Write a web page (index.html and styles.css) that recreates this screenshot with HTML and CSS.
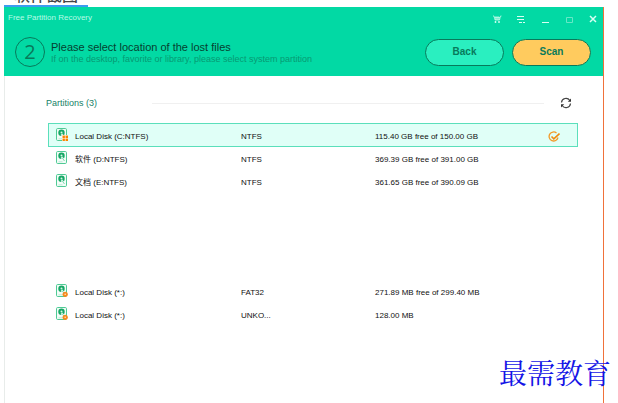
FILE: index.html
```
<!DOCTYPE html>
<html lang="en">
<head>
<meta charset="utf-8">
<title>Free Partition Recovery</title>
<link rel="stylesheet" href="styles.css">
</head>
<body>
<svg class="defs" aria-hidden="true">
  <symbol id="disk" viewBox="0 0 12 13">
    <rect x=".5" y=".5" width="10" height="12" rx="1.2" fill="#f2fcf7" stroke="#4fca95"/>
    <circle cx="5.5" cy="4.800" r="3.200" fill="#16a765"/>
    <circle cx="5.500" cy="4.600" r="1" fill="#d8f7e8"/>
    <path d="M5.500 6.200 8.500 10" stroke="#f2fcf7" stroke-width="2"/>
    <path d="M6 6.500 8.500 10" stroke="#5fcf9f" stroke-width=".8"/>
    <path d="M2.500 10.800h4" stroke="#a5e3c8" stroke-width=".7"/>
  </symbol>
  <symbol id="badge" viewBox="0 0 12 13">
    <circle cx="9.200" cy="10.300" r="2.600" fill="#f58a1f"/>
    <circle cx="9.200" cy="10.300" r=".8" fill="#ffe0b8"/>
  </symbol>
</svg>
<h1 class="section"><span>软件截图</span></h1>
<main class="window">
  <header class="top">
    <div class="titlebar">
      <span class="app">Free Partition Recovery</span>
      <nav class="controls">
        <button aria-label="Buy"><svg viewBox="0 0 10 10"><path d="M1 2h1l1 4h4.500l1-4h1M2.500 3.500h5.500M3 5h5M4 2v4M6 2v4" fill="none" stroke="currentColor" stroke-width=".7"/><circle cx="3.500" cy="8" r=".9"/><circle cx="7" cy="8" r=".9"/></svg></button>
        <button aria-label="Menu"><svg viewBox="0 0 10 10"><path d="M1 2.500h7M1 5.500h7M3 8.500h3M7 8.500h2" fill="none" stroke="currentColor"/></svg></button>
        <button aria-label="Minimize"><svg viewBox="0 0 10 10"><path d="M2 8.500h7" fill="none" stroke="currentColor"/></svg></button>
        <button class="off" aria-label="Maximize"><svg viewBox="0 0 10 10"><path d="M2.500 3.500h6v5h-6z" fill="none" stroke="currentColor"/></svg></button>
        <button aria-label="Close"><svg viewBox="0 0 10 10"><path d="m2 2 6 6M8 2 2 8" fill="none" stroke="currentColor" stroke-width="1.500"/></svg></button>
      </nav>
    </div>
    <div class="step">
      <span class="number">2</span>
      <div class="prompt">
        <h2>Please select location of the lost files</h2>
        <p>If on the desktop, favorite or library, please select system partition</p>
      </div>
      <button class="pill">Back</button>
      <button class="pill scan">Scan</button>
    </div>
  </header>
  <section class="list">
    <div class="caption">
      <h3>Partitions (3)</h3>
      <span class="rule"></span>
      <button class="refresh" aria-label="Refresh"><svg viewBox="0 0 12 12"><path d="M1.500 5.500A4.500 4.500 0 0 1 9.800 3.500M10.500 6.500A4.500 4.500 0 0 1 2.200 8.500" fill="none" stroke="#444" stroke-width="1.200"/><path d="M11 1.500v3.300H7.800zM1 10.500V7.200h3.200z" fill="#333"/></svg></button>
    </div>
    <table>
      <colgroup><col class="c-icon"><col class="c-name"><col class="c-type"><col><col class="c-check"></colgroup>
      <tbody>
        <tr class="selected">
          <td><svg class="disk" viewBox="0 0 12 13"><use href="#disk"/><path d="M6 7h6v6H6z" fill="#fff"/><path d="M6.500 7.500h2.400v2.400H6.500zM9.500 7.500h2.500v2.400H9.500zM6.500 10.500h2.400v2.400H6.500zM9.500 10.500h2.500v2.400H9.500z" fill="#fa8500"/></svg></td>
          <td>Local Disk (C:NTFS)</td><td>NTFS</td><td>115.40 GB free of 150.00 GB</td>
          <td><svg class="check" viewBox="0 0 12 12"><path d="M8.500 2A4.500 4.500 0 1 0 10 6.500" fill="none" stroke="#f39a28" stroke-width="1.300"/><path d="m3.500 5.500 2.300 2.300L11.500 2.500" fill="none" stroke="#f08a10" stroke-width="1.600"/></svg></td>
        </tr>
        <tr><td><svg class="disk"><use href="#disk"/></svg></td><td>软件 (D:NTFS)</td><td>NTFS</td><td>369.39 GB free of 391.00 GB</td><td></td></tr>
        <tr><td><svg class="disk"><use href="#disk"/></svg></td><td>文档 (E:NTFS)</td><td>NTFS</td><td>361.65 GB free of 390.09 GB</td><td></td></tr>
      </tbody>
    </table>
    <table class="lost">
      <colgroup><col class="c-icon"><col class="c-name"><col class="c-type"><col><col class="c-check"></colgroup>
      <tbody>
        <tr><td><svg class="disk"><use href="#disk"/><use href="#badge"/></svg></td><td>Local Disk (*:)</td><td>FAT32</td><td>271.89 MB free of 299.40 MB</td><td></td></tr>
        <tr><td><svg class="disk"><use href="#disk"/><use href="#badge"/></svg></td><td>Local Disk (*:)</td><td>UNKO...</td><td>128.00 MB</td><td></td></tr>
      </tbody>
    </table>
  </section>
</main>
<div class="watermark">最需教育</div>
</body>
</html>
```
FILE: styles.css
```
* { box-sizing: border-box; }
body {
  margin: 0;
  height: 100vh;
  overflow: hidden;
  display: flex;
  flex-direction: column;
  background: #fff;
  color: #111;
  font: 8px/12px "Liberation Sans", "Noto Sans CJK SC", sans-serif;
}
h1, h2, h3, p { margin: 0; font-weight: normal; }
button { border: 0; padding: 0; background: none; font: inherit; color: inherit; }
svg { display: block; }
.defs { position: absolute; width: 0; height: 0; }

.section {
  display: flex;
  align-items: flex-end;
  align-self: flex-start;
  flex: none;
  height: 7px;
  margin-left: 4px;
  padding: 0 10px;
  overflow: hidden;
  border-bottom: 2px solid #3c9cf0;
  color: #444;
  font-size: 16px;
  font-weight: 500;
  line-height: 18px;
}

.window {
  flex: 1;
  margin: 0 14px 0 4px;
  border-left: 1px solid #e8ecea;
  border-right: 1px solid #f0713a;
}
.top {
  height: 69px;
  margin-left: -1px;
  background: #02d9a4;
}
.titlebar {
  display: flex;
  justify-content: space-between;
  align-items: center;
  height: 22px;
  padding: 0 5px 0 4px;
  color: #b8fbe6;
}
.controls { display: flex; gap: 14px; padding-top: 2px; color: #d8fff3; fill: currentColor; }
.controls svg { width: 10px; height: 10px; }
.controls .off { color: #66e8c6; }
.step { display: flex; align-items: center; height: 46px; padding: 0 12px 0 11px; gap: 8px; }
.number {
  flex: none;
  width: 30px;
  height: 30px;
  border: 1px solid #087a5b;
  border-radius: 50%;
  color: #087a5b;
  font: 20px/28px "Open Sans", sans-serif;
  text-align: center;
}
.prompt { flex: 1; margin-left: -2px; padding-top: 2px; white-space: nowrap; }
.prompt h2 { color: #063f30; font-size: 11px; }
.prompt p { color: #079a73; font-size: 9px; }
.pill {
  width: 79px;
  height: 27px;
  border: 1px solid #087a5b;
  border-radius: 14px;
  background: #2aefc0;
  color: #087a5b;
  font-size: 10px;
  font-weight: bold;
}
.pill.scan { background: #ffcb5e; }

.list { padding: 19px 25px 0 43px; }
.caption { display: flex; align-items: center; height: 16px; margin: 0 6px 12px -2px; color: #168267; }
.caption h3 { width: 106px; font-size: 9px; }
.rule { flex: 1; height: 1px; margin-right: 16px; background: #f0f0f0; }
.refresh svg { width: 12px; height: 12px; }

table { width: 100%; table-layout: fixed; border-collapse: separate; border-spacing: 0; }
td { height: 23px; padding: 3px 0 0; white-space: nowrap; }
.selected td { height: 24px; border: 1px solid #5bdfbb; border-width: 1px 0; background: #e0fff7; }
.selected td:first-child { border-left-width: 1px; }
.selected td:last-child { border-right-width: 1px; }
.c-icon { width: 27px; }
.c-name { width: 166px; }
.c-type { width: 134px; }
.c-check { width: 30px; }
.disk { width: 12px; height: 13px; margin: 0 0 5px 8px; }
.selected .disk { margin-left: 7px; }
.check { width: 12px; height: 12px; }
.lost { margin-top: 87px; }

.watermark {
  position: absolute;
  right: 7px;
  bottom: 13px;
  color: #1414e6;
  font: 28px/36px "AR PL UKai CN", KaiTi, "Noto Serif CJK SC", "Noto Sans CJK SC", serif;
}
```
